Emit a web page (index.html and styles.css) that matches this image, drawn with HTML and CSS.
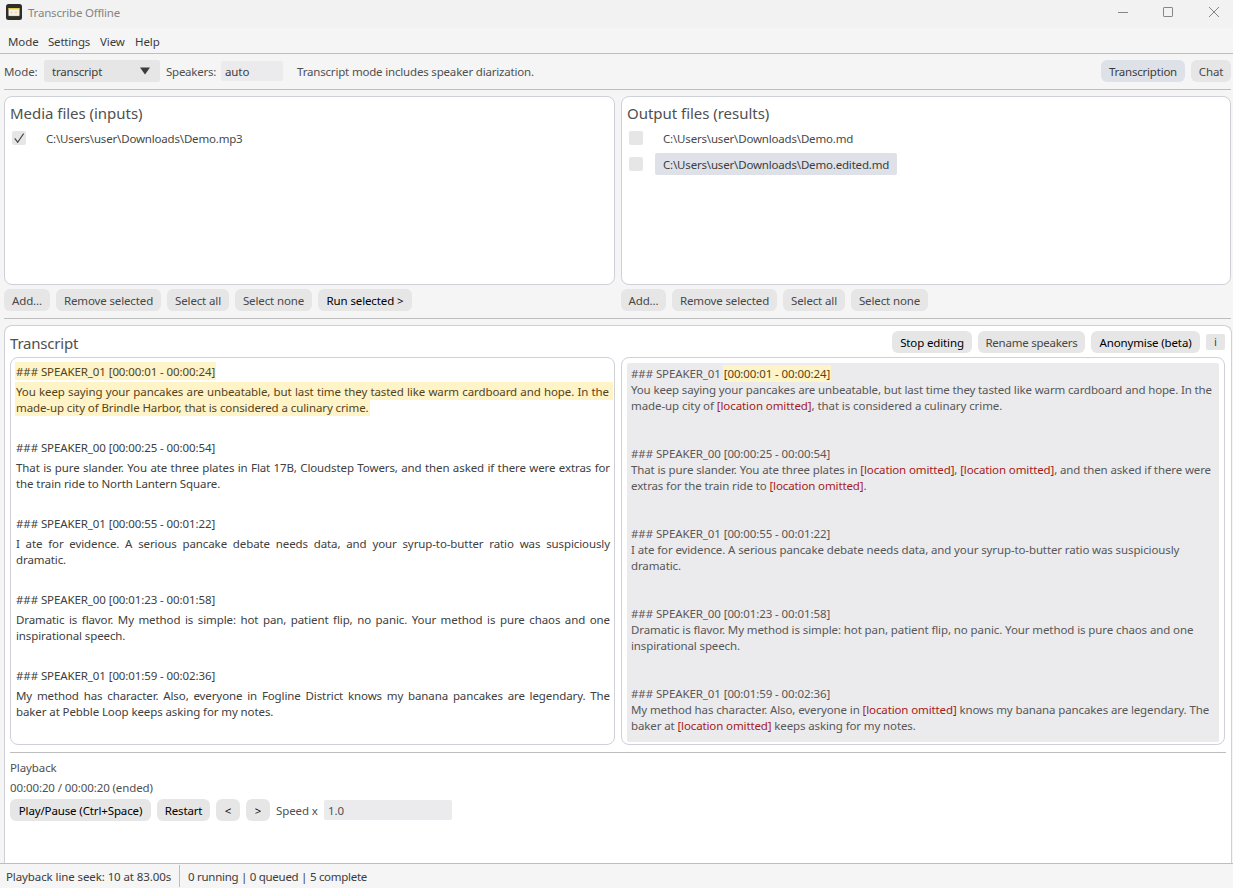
FILE: index.html
```html
<!DOCTYPE html>
<html lang="en">
<head>
<meta charset="utf-8">
<title>Transcribe Offline</title>
<link rel="stylesheet" href="styles.css">
</head>
<body>
<header class="titlebar">
  <svg class="logo" width="16" height="16" viewBox="0 0 16 16"><rect width="16" height="16" rx="2.500" fill="#2e2e29"/><rect x="2.500" y="4" width="11" height="8" rx=".8" fill="#f5f1e6"/><path d="M2.500 4.700h11" stroke="#e6c84a" stroke-width="1.400"/><path d="M2.800 11.600h10.400" stroke="#e9dba0" stroke-width=".8"/><rect x="4.800" y="7.500" width="1.600" height="1.800" fill="#ecd68a"/><rect x="9.200" y="7.500" width="1.600" height="1.800" fill="#ecd68a"/></svg>
  <span class="app-name">Transcribe Offline</span>
  <svg class="window-controls" width="104" height="12" viewBox="0 0 104 12" fill="none" stroke="#858585"><path d="M0 6.500h10"/><rect x="45.500" y="1.500" width="9" height="9" rx=".6"/><path d="M91 1l10 10M101 1L91 11"/></svg>
</header>
<nav class="menubar"><span class="m-mode">Mode</span><span class="m-settings">Settings</span><span class="m-view">View</span><span>Help</span></nav>

<section class="toolbar">
  <span class="mode-label">Mode:</span>
  <div class="select"><span>transcript</span><svg width="10" height="8" viewBox="0 0 10 8"><path d="M0 .5h10L5 7.500z" fill="#3c3c3c"/></svg></div>
  <span class="speakers-label">Speakers:</span>
  <div class="field speakers">auto</div>
  <span class="hint">Transcript mode includes speaker diarization.</span>
  <div class="tabs"><button class="btn active w-transcription">Transcription</button><button class="btn w-chat">Chat</button></div>
</section>

<main>
  <section class="files">
    <div class="file-col">
      <div class="panel list">
        <h2>Media files (inputs)</h2>
        <div class="file"><span class="check"><svg width="14" height="14" viewBox="0 0 14 14"><path d="M2.700 7.400L5.700 11.200L11.600 2.600" fill="none" stroke="#444" stroke-width="1.100"/></svg></span><span class="path">C:\Users\user\Downloads\Demo.mp3</span></div>
      </div>
      <div class="actions"><button class="btn w-add">Add...</button><button class="btn w-remove">Remove selected</button><button class="btn w-all">Select all</button><button class="btn w-none">Select none</button><button class="btn strong w-run">Run selected &gt;</button></div>
    </div>
    <div class="file-col">
      <div class="panel list">
        <h2>Output files (results)</h2>
        <div class="file"><span class="check"></span><span class="path">C:\Users\user\Downloads\Demo.md</span></div>
        <div class="file"><span class="check"></span><span class="path selected">C:\Users\user\Downloads\Demo.edited.md</span></div>
      </div>
      <div class="actions"><button class="btn w-add-out">Add...</button><button class="btn w-remove">Remove selected</button><button class="btn w-all">Select all</button><button class="btn w-none">Select none</button></div>
    </div>
  </section>

  <section class="panel transcript">
    <div class="transcript-head">
      <h2>Transcript</h2>
      <div class="head-actions"><button class="btn strong w-stop">Stop editing</button><button class="btn w-rename">Rename speakers</button><button class="btn strong w-anon">Anonymise (beta)</button><button class="info">i</button></div>
    </div>
    <div class="panes">
      <div class="panel source">
        <article class="current"><h3><mark>### SPEAKER_01 [00:00:01 - 00:00:24]</mark></h3><p class="full">You keep saying your pancakes are unbeatable, but last time they tasted like warm cardboard and hope. In the</p><p><mark>made-up city of Brindle Harbor, that is considered a culinary crime.</mark></p></article>
        <article><h3>### SPEAKER_00 [00:00:25 - 00:00:54]</h3><p class="full">That is pure slander. You ate three plates in Flat 17B, Cloudstep Towers, and then asked if there were extras for</p><p>the train ride to North Lantern Square.</p></article>
        <article><h3>### SPEAKER_01 [00:00:55 - 00:01:22]</h3><p class="full">I ate for evidence. A serious pancake debate needs data, and your syrup-to-butter ratio was suspiciously</p><p>dramatic.</p></article>
        <article><h3>### SPEAKER_00 [00:01:23 - 00:01:58]</h3><p class="full">Dramatic is flavor. My method is simple: hot pan, patient flip, no panic. Your method is pure chaos and one</p><p>inspirational speech.</p></article>
        <article><h3>### SPEAKER_01 [00:01:59 - 00:02:36]</h3><p class="full">My method has character. Also, everyone in Fogline District knows my banana pancakes are legendary. The</p><p>baker at Pebble Loop keeps asking for my notes.</p></article>
      </div>
      <div class="panel edited">
        <div class="editor">
          <article><h3>### SPEAKER_01 <mark>[00:00:01 - 00:00:24]</mark></h3><p class="tight">You keep saying your pancakes are unbeatable, but last time they tasted like warm cardboard and hope. In the</p><p class="loose">made-up city of <b>[location omitted]</b>, that is considered a culinary crime.</p></article>
          <article><h3>### SPEAKER_00 [00:00:25 - 00:00:54]</h3><p>That is pure slander. You ate three plates in <b>[location omitted]</b>, <b>[location omitted]</b>, and then asked if there were</p><p>extras for the train ride to <b>[location omitted]</b>.</p></article>
          <article><h3>### SPEAKER_01 [00:00:55 - 00:01:22]</h3><p>I ate for evidence. A serious pancake debate needs data, and your syrup-to-butter ratio was suspiciously</p><p>dramatic.</p></article>
          <article><h3>### SPEAKER_00 [00:01:23 - 00:01:58]</h3><p class="airy">Dramatic is flavor. My method is simple: hot pan, patient flip, no panic. Your method is pure chaos and one</p><p>inspirational speech.</p></article>
          <article><h3>### SPEAKER_01 [00:01:59 - 00:02:36]</h3><p>My method has character. Also, everyone in <b>[location omitted]</b> knows my banana pancakes are legendary. The</p><p>baker at <b>[location omitted]</b> keeps asking for my notes.</p></article>
        </div>
      </div>
    </div>
    <div class="playback">
      <div class="row">Playback</div>
      <div class="row">00:00:20 / 00:00:20 (ended)</div>
      <div class="controls"><button class="btn strong w-play">Play/Pause (Ctrl+Space)</button><button class="btn strong w-restart">Restart</button><button class="btn strong w-step">&lt;</button><button class="btn strong w-step">&gt;</button><span class="speed-label">Speed x</span><div class="field speed">1.0</div></div>
    </div>
  </section>
</main>
<footer class="status"><span class="seek">Playback line seek: 10 at 83.00s</span><span class="queue">0 running | 0 queued | 5 complete</span></footer>
</body>
</html>
```
FILE: styles.css
```css
* { box-sizing: border-box; margin: 0; padding: 0; }
body {
  width: 1233px; height: 888px; overflow: hidden;
  display: flex; flex-direction: column;
  background: #f5f5f5; color: #505050;
  font: 11.5px/16px "Noto Sans", "Open Sans", sans-serif;
  letter-spacing: -0.1px; white-space: nowrap;
}
svg { display: block; flex: none; }

.titlebar { flex: none; height: 28px; padding: 0 14px 4px 6px; display: flex; align-items: center; background: #f2f2f2; }
.app-name { margin: 2px 0 0 6px; color: #858585; letter-spacing: -0.2px; }
.window-controls { margin-left: auto; margin-right: -3px; }

.menubar { flex: none; height: 26px; padding: 6px 8px 0; display: flex; border-bottom: 1px solid #bebebe; color: #3c3c3c; }
.m-mode { width: 40px; }
.m-settings { width: 52px; letter-spacing: -0.2px; }
.m-view { width: 35px; }

.toolbar { flex: none; height: 36px; margin: 0 2px 0 4px; padding: 0 0 1px; display: flex; align-items: center; border-bottom: 1px solid #bebebe; }
.toolbar > span, .select > span { padding-top: 2px; }
.mode-label { width: 40px; }
.select { width: 116px; height: 22px; padding: 0 10px 0 8px; display: flex; align-items: center; justify-content: space-between; background: #e6e6e6; border-radius: 2px; color: #3c3c3c; letter-spacing: -0.2px; }
.speakers-label { width: 55px; margin-left: 6px; letter-spacing: -0.25px; }
.field { height: 20px; padding: 3px 4px 1px; background: #ebebed; border-radius: 2px; }
.speakers { width: 62px; color: #3c3c3c; }
.hint { margin-left: 14px; letter-spacing: -0.18px; }
.tabs { display: flex; gap: 6px; margin-left: auto; }

.btn { flex: none; height: 22px; padding-top: 2px; border: 0; border-radius: 6px; background: #e6e6e6; color: #484848; font: inherit; letter-spacing: -0.13px; text-align: center; }
.btn.active { background: #dee2e8; color: #3c3c3c; letter-spacing: -0.22px; }
.btn.strong { color: #000; }
.w-transcription { width: 84px; }
.w-chat { width: 40px; }
.w-add { width: 46px; }
.w-add-out { width: 45px; }
.w-remove { width: 105px; }
.w-all { width: 62px; }
.w-none { width: 77px; }
.w-run { width: 94px; }
.w-stop { width: 80px; }
.w-rename { width: 107px; }
.btn.w-rename { letter-spacing: -0.25px; }
.w-anon { width: 109px; }
.w-play { width: 141px; }
.w-restart { width: 53px; }
.w-step { width: 24px; }

main { flex: 1; min-height: 0; padding: 6px 1px 0 4px; display: flex; flex-direction: column; }
.panel { background: #fff; border: 1px solid #cfd0d8; border-radius: 8px; }
h2 { font-size: 15px; font-weight: 400; line-height: 20px; letter-spacing: -0.03px; }
.files { flex: none; height: 223px; margin-right: 1px; display: grid; grid-template-columns: 611px 610px; gap: 6px; border-bottom: 1px solid #bebebe; }
.list { height: 189px; padding: 6px 5px; }
.file { height: 26px; padding: 0 0 4px 2px; display: flex; align-items: center; gap: 12px; }
.list h2 + .file { margin-top: 4px; }
.check { width: 14px; height: 14px; background: #e6e6e6; border-radius: 2px; }
.path { height: 22px; padding: 4px 8px 2px; border-radius: 2px; color: #484848; letter-spacing: -0.18px; }
.path.selected { background: #dee2e8; color: #3c3c3c; }
.actions { display: flex; gap: 6px; margin-top: 4px; }

.transcript { flex: 1; min-height: 0; margin-top: 6px; padding: 0 5px; border-bottom: 0; border-radius: 8px 8px 0 0; }
.transcript-head { height: 31px; display: flex; justify-content: space-between; padding-top: 5px; }
.transcript-head h2 { margin-top: 2px; letter-spacing: -0.2px; }
.head-actions { display: flex; gap: 6px; align-items: flex-start; margin-right: 1px; }
.info { width: 19px; height: 16px; margin-top: 3px; border: 0; border-radius: 2px; background: #e6e6e6; color: #484848; font: inherit; }

.panes { display: grid; grid-template: 388px / 605px 604px; gap: 6px; }
h3 { font: inherit; }
mark { background: #fff3c8; color: #55431a; }
.source { padding: 4px 0 0; color: #404040; }
.source article { height: 76px; padding-left: 5px; }
.source h3 { height: 22px; padding-top: 2px; }
.source p { width: 594px; height: 16px; }
.source .full { text-align-last: justify; }
.source .current .full { width: 598px; margin-left: -1px; padding: 2px 4px 0 1px; height: 18px; margin-top: -2px; background: #fff3c8; color: #55431a; }
.source mark { display: inline-block; height: 16px; margin-left: -1px; padding: 0 1px; }
.source h3 mark { height: 18px; margin-top: -2px; padding-top: 2px; }
.edited { padding: 5px 5px 0; }
.editor { width: 592px; height: 379px; padding: 3px 4px; background: #ebebed; border-radius: 2px; color: #585858; overflow: hidden; letter-spacing: -0.12px; }
.editor article { height: 80px; }
.editor h3 { letter-spacing: -0.1px; }
.editor mark { display: inline-block; height: 17px; margin: -1px 0 0 -1px; padding: 1px 1px 0; line-height: 15px; }
.editor b { font-weight: 400; color: #a52020; }
.editor .tight { letter-spacing: -0.145px; }
.editor .airy { letter-spacing: -0.1px; }
.editor .loose { letter-spacing: -0.08px; }

.playback { margin-top: 7px; padding-top: 5px; border-top: 1px solid #bebebe; }
.row { height: 20px; padding-top: 2px; }
.controls { display: flex; align-items: center; gap: 6px; margin-top: 1px; }
.speed-label { width: 42px; padding-top: 2px; }
.speed { width: 128px; }

.status { flex: none; height: 25px; padding-left: 6px; display: flex; border-top: 1px solid #bebebe; line-height: 26px; color: #3c3c3c; }
.seek { width: 174px; height: 22px; margin-top: 1px; border-right: 1px solid #bebebe; line-height: 24px; }
.queue { padding-left: 8px; letter-spacing: -0.28px; }
```
